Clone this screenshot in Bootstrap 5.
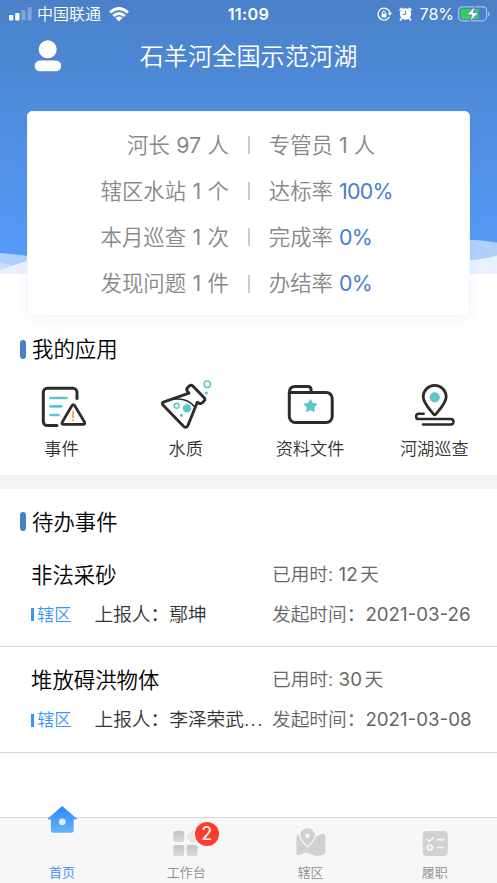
<!DOCTYPE html>
<html lang="zh-CN">
<head>
<meta charset="utf-8">
<meta name="viewport" content="width=device-width, initial-scale=1">
<title>石羊河全国示范河湖</title>
<link href="https://cdn.jsdelivr.net/npm/bootstrap@5.3.0/dist/css/bootstrap.min.css" rel="stylesheet">
<style>
body{font-family:Inter,"Noto Sans CJK SC",sans-serif;font-weight:350;background:#fff;color:#111;height:883px;overflow:hidden}
svg{display:block;flex:none}
b{font-weight:400}
.screen{height:883px}
.hero{height:274px;background:linear-gradient(#4a80c7 0,#4f8cdc 105px,#559af7 255px);flex:none}
.waves{position:absolute;left:0;bottom:0;overflow:visible}
.statusbar{height:28px;font-size:16px;line-height:28px;padding:0 7px 0 9px}
.clock{font-weight:600;font-size:16.3px;letter-spacing:.3px;position:absolute;left:0;right:0;text-align:center}
.alarm{margin-left:7px}
.charge{margin-right:4px;font-weight:400}
.titlebar{height:56px;padding-left:34px}
.page-title{position:absolute;left:0;right:0;text-align:center;font-size:24.2px;line-height:55px;font-weight:350}
.stats{position:relative;margin:27px 27px 0;height:205px;padding-top:9.5px;border-radius:5px;background:#fff;border:1px solid #f0f5ff;box-shadow:0 6px 12px rgba(80,110,220,.06);font-size:21.4px;color:#888}
.stat-line{height:46.3px;line-height:46.3px;white-space:pre}
.stat-l{width:201px;text-align:right;word-spacing:.4px}
.stat-sep{width:1.5px;height:18px;background:#ccc;margin:0 19.3px 0 19px}
.blue{color:#4a80c7;letter-spacing:-.7px;font-weight:400}
.heading{font-size:21.4px;line-height:32px;height:32px;padding-left:20px;gap:6px;color:#000}
.heading i{width:6px;height:19px;border-radius:3px;background:#4a80c7}
.my-apps{height:201px;padding-top:59px}
.apps{font-size:17.2px;line-height:24px;color:#333;padding-top:11px}
.apps svg{margin-bottom:5px}
.apps .col-3{position:relative;left:-.6px}
.band{height:14px;background:#f4f4f4;flex:none}
.pending{padding-top:16.5px}
.pending .heading{margin-bottom:4px}
.todo{height:105.6px;border-bottom:1px solid #d9d9d9;padding:17px 0 0 31px}
.todo-t{font-size:21.4px;line-height:32px;color:#000;width:241px}
.grey{font-size:18.7px;color:#666;line-height:32px;white-space:pre}
.days{margin-right:2.5px;font-weight:400}
.todo-b{font-size:18.7px;line-height:32px;margin-top:8px;color:#333}
.area{width:63.5px;font-size:17.1px;color:#3a95f8;gap:3.5px}
.area i{width:2.6px;height:13px;background:#3a95f8}
.who{width:177.5px;white-space:nowrap}
.dots{letter-spacing:1.3px}
.tabs{height:66px;background:#f7f7f7;border-top:1px solid #d9d9d9;font-size:13px;color:#8e8e8e;padding-top:2px}
.tab-label{line-height:18px;margin-top:3px}
.tab-on{color:#3a8cf7}
.home-icon{margin:-20px 0 23px}
.count{position:absolute;left:70.5px;top:2.3px;width:24px;height:24px;border-radius:50%;background:#ff3b30;color:#fff;font-size:18px;font-weight:400;line-height:24px;text-align:center}
</style>
<script src="https://cdn.jsdelivr.net/npm/bootstrap@5.3.0/dist/js/bootstrap.bundle.min.js"></script>
</head>
<body>
<div class="screen d-flex flex-column">
<header class="hero position-relative">
  <svg class="waves" width="497" height="24" viewBox="0 0 497 24">
    <path fill="#b0d0fc" d="M0 3L30 6V24H0zM467 -10.500Q482 -10 497 -7.500V24H467z"/>
    <path fill="#c7ddfc" d="M0 12L12 16 0 20z"/>
    <path fill="#e8f1fe" d="M0 20L30 9.500V24H0zM467 10.500Q483 9.500 497 5.500V24H467z"/>
  </svg>
  <div class="statusbar d-flex align-items-center text-white position-relative">
    <svg width="24" height="16" viewBox="0 0 24 16" fill="#fff"><rect y="9" width="4.300" height="5.500" rx="1"/><rect x="6.200" y="7" width="4.300" height="7.500" rx="1"/><g opacity=".28"><rect x="12.400" y="4" width="4.300" height="10.500" rx="1"/><rect x="18.500" y="1" width="4.300" height="13.500" rx="1"/></g></svg>
    <span class="ms-1">中国联通</span>
    <svg class="ms-2" width="20" height="15" viewBox="0 0 20 15" fill="none" stroke="#fff" stroke-width="2.900"><path d="M1 5.500Q10-2.600 19 5.500M4.200 9Q10 3.900 15.800 9"/><path stroke="none" fill="#fff" d="M10 14.500L6.500 10.900Q10 8 13.500 10.900z"/></svg>
    <span class="clock">11:09</span>
    <svg class="ms-auto" width="15" height="15" viewBox="0 0 15 15"><path d="M9.800 1.800A6 6 0 1 0 12.400 10M9.800 1.800A6 6 0 0 1 13 6" fill="none" stroke="#fff" stroke-width="1.300"/><path d="M10.700 5.800h4.300l-2.200 3z" fill="#fff"/><rect x="4.500" y="6.500" width="5" height="3.900" rx=".6" fill="#fff"/><path d="M5.500 7V5.500a1.500 1.500 0 0 1 3 0V7" fill="none" stroke="#fff"/></svg>
    <svg class="alarm" width="13" height="14" viewBox="0 0 13 14"><circle cx="6.500" cy="7" r="5.700" fill="#fff"/><path d="M1.200 2.800L2.800 1.400M11.800 2.800L10.200 1.400M2.600 11.500L1.500 12.900M10.400 11.500L11.500 12.900" stroke="#fff" stroke-width="1.800" stroke-linecap="round"/><path d="M6.700 3.600V7.300H3.500" fill="none" stroke="#4a80c7" stroke-width="1"/></svg>
    <span class="ms-2 charge">78%</span>
    <svg width="32" height="16" viewBox="0 0 32 16"><rect x=".6" y=".9" width="28" height="13.900" rx="3.800" fill="none" stroke="#fff" stroke-opacity=".5" stroke-width="1.200"/><path d="M30 5.500q1.600.8 1.600 2.400T30 10.300z" fill="#fff" opacity=".5"/><path d="M5 2.900H20.500V12.900H5a2.300 2.300 0 0 1-2.300-2.300V5.200A2.300 2.300 0 0 1 5 2.900z" fill="#32d158"/><path d="M17 .3L8.700 8.900h5L11.900 15.700 20.700 6.600H15.500z" fill="#fff" stroke="#4a80c7" stroke-width=".9"/></svg>
  </div>
  <div class="titlebar d-flex align-items-center text-white position-relative">
    <svg width="28" height="32" viewBox="0 0 28 32" fill="#fff"><circle cx="13.700" cy="9.300" r="9"/><rect x=".7" y="20.500" width="26.500" height="10.700" rx="5.300"/></svg>
    <h1 class="page-title m-0">石羊河全国示范河湖</h1>
  </div>
  <div class="stats">
    <div class="stat-line d-flex align-items-center"><span class="stat-l">河长 <b>97</b> 人</span><i class="stat-sep"></i><span>专管员 <b>1</b> 人</span></div>
    <div class="stat-line d-flex align-items-center"><span class="stat-l">辖区水站 <b>1</b> 个</span><i class="stat-sep"></i><span>达标率 <span class="blue">100%</span></span></div>
    <div class="stat-line d-flex align-items-center"><span class="stat-l">本月巡查 <b>1</b> 次</span><i class="stat-sep"></i><span>完成率 <span class="blue">0%</span></span></div>
    <div class="stat-line d-flex align-items-center"><span class="stat-l">发现问题 <b>1</b> 件</span><i class="stat-sep"></i><span>办结率 <span class="blue">0%</span></span></div>
  </div>
</header>
<section class="my-apps">
  <div class="heading d-flex align-items-center"><i></i><span>我的应用</span></div>
  <div class="apps row g-0 text-center">
    <div class="col-3"><svg class="mx-auto" width="60" height="56" viewBox="0 0 60 56" fill="none" stroke="#2c2c2c" stroke-width="3" stroke-linecap="round" stroke-linejoin="round"><path d="M45 22.500V16.300a4 4 0 0 0-4-4H15.300a4 4 0 0 0-4 4V45.500a4 4 0 0 0 4 4H25"/><path stroke="#5cc7cf" stroke-width="2.700" d="M18.500 22H34.500M18.500 30.300H29.300M18.500 39H26.500"/><path stroke-width="2.700" d="M41.300 28.500Q42 28.500 42.600 29.500L52.600 46.300Q53.300 48.300 51.500 48.400H31Q29.300 48.300 30.200 46.300L40 29.500Q40.600 28.500 41.300 28.500z"/><path stroke="#f0ad2e" stroke-width="1.900" stroke-linecap="butt" d="M41.100 35V42M41.100 43.500v1.800"/></svg>事件</div>
    <div class="col-3"><svg class="mx-auto" width="60" height="56" viewBox="0 0 60 56" fill="none" stroke="#2c2c2c" stroke-width="2.900" stroke-linecap="round" stroke-linejoin="round"><path d="M33 17.200L8 25.800Q5.300 27 7 29L27.500 50.200Q30.300 52.800 31.800 49.700L41.300 26.300 42.800 27.100Q45 28 46.300 26.800L48.300 24.800Q49.500 23.300 48.200 21.700L36.800 10Q35 8.200 33.200 10L31.300 12Q30 13.700 31.500 15.400z"/><path stroke-width="1.500" d="M18 23.300Q31.500 21.800 39 31.200"/><g stroke="#5cc7cf" stroke-width="1.500"><circle cx="20.700" cy="29.800" r="2.500"/><circle cx="51.300" cy="8.300" r="3.200"/></g><g fill="#5cc7cf" stroke="none"><circle cx="31" cy="32.300" r="4.100"/><circle cx="25.400" cy="39.300" r="1.600"/><circle cx="50.400" cy="17" r="1.600"/></g></svg>水质</div>
    <div class="col-3"><svg class="mx-auto" width="60" height="56" viewBox="0 0 60 56" fill="none" stroke="#2c2c2c" stroke-width="3" stroke-linecap="round" stroke-linejoin="round"><path d="M9.300 16.500H46a6 6 0 0 1 6.200 6V40.500a6 6 0 0 1-6.200 6H15.300a6 6 0 0 1-6-6zM9.300 16.500q.3-6 5.800-6H28q3 0 3 3v2.500"/><path fill="#5cc7cf" stroke="#5cc7cf" stroke-width="1.500" d="M30.400 24l1.900 3.600 4 .7-2.900 2.800.6 4.100-3.600-1.900-3.700 1.900.7-4.100-2.900-2.800 4-.7z"/></svg>资料文件</div>
    <div class="col-3"><svg class="mx-auto" width="60" height="56" viewBox="0 0 60 56" fill="none" stroke="#2c2c2c" stroke-width="2.800" stroke-linecap="round" stroke-linejoin="round"><path d="M30.700 9.300a11.500 11.500 0 0 1 11.500 11.500c0 6-6 12-10.300 17.400q-1.200 1.500-2.400 0C25.200 32.800 19.200 26.800 19.200 20.800A11.500 11.500 0 0 1 30.700 9.300z"/><circle cx="30.700" cy="21.400" r="5.100" stroke="none" fill="#5cc7cf"/><path stroke-width="2.500" d="M19.700 37.700H14.800a2.600 2.600 0 0 0 0 5.400H46.700a2.700 2.700 0 0 1 0 5.500H18.900"/></svg>河湖巡查</div>
  </div>
</section>
<div class="band"></div>
<section class="pending">
  <div class="heading d-flex align-items-center"><i></i><span>待办事件</span></div>
  <article class="todo">
    <div class="d-flex"><span class="todo-t">非法采砂</span><span class="grey">已用时: <span class="days">12</span>天</span></div>
    <div class="todo-b d-flex"><span class="area d-flex align-items-center"><i></i>辖区</span><span class="who">上报人：鄢坤</span><span class="grey">发起时间：<b>2021-03-26</b></span></div>
  </article>
  <article class="todo">
    <div class="d-flex"><span class="todo-t">堆放碍洪物体</span><span class="grey">已用时: <span class="days">30</span>天</span></div>
    <div class="todo-b d-flex"><span class="area d-flex align-items-center"><i></i>辖区</span><span class="who">上报人：李泽荣武<span class="dots">...</span></span><span class="grey">发起时间：<b>2021-03-08</b></span></div>
  </article>
</section>
<nav class="tabs d-flex mt-auto text-center">
  <div class="flex-fill w-25 tab-on"><svg class="mx-auto home-icon" width="60" height="40" viewBox="0 -20 60 40"><defs><linearGradient id="home" x1="0" y1="0" x2="0" y2="1"><stop stop-color="#2b88fc"/><stop offset="1" stop-color="#68b1fb"/></linearGradient><linearGradient id="tile" x1="0" y1="0" x2="0" y2="1"><stop stop-color="#c3c3c3"/><stop offset="1" stop-color="#dadada"/></linearGradient></defs><path fill="url(#home)" d="M30.200-14L44.700-1.400Q45.200-.6 44.200-.6H41.700V10.600Q41.700 12.700 39.700 12.700H20.900Q18.900 12.700 18.900 10.600V-.6H16.300Q15.300-.6 15.900-1.400z"/><circle cx="30.300" cy="1.800" r="3.400" fill="#deedfc"/></svg><div class="tab-label">首页</div></div>
  <div class="flex-fill w-25 position-relative"><svg class="mx-auto" width="60" height="40" viewBox="0 0 60 40"><g fill="url(#tile)"><rect x="17.300" y="11" width="11" height="11" rx="2.500"/><rect x="17.300" y="25" width="11" height="11" rx="2.500"/><rect x="30.600" y="25" width="11" height="11" rx="2.500"/></g><rect x="31.500" y="11.500" width="10.500" height="10.500" rx="2" transform="rotate(45 36.700 16.700)" fill="#e8e8e8"/></svg><span class="count">2</span><div class="tab-label">工作台</div></div>
  <div class="flex-fill w-25"><svg class="mx-auto" width="60" height="40" viewBox="0 0 60 40"><path fill="#d1d1d1" d="M17.500 14.500L25 16 34 17 41.600 13.600Q44.400 13 44.400 16V32.500Q44.400 34 42.900 34.600L37 36Q35.500 36.300 34 35.500L26.500 33Q25 32.500 23.500 33L18 35Q15.400 35.600 15.400 33V17Q15.400 15 17.500 14.500z"/><path fill="#d1d1d1" stroke="#f7f7f7" stroke-width="1.300" d="M26.500 7.500a7.800 7.800 0 0 1 7.900 7.800c0 4.500-4.500 8-7.900 11.500C23 23.300 18.600 19.800 18.600 15.300A7.800 7.800 0 0 1 26.500 7.500z"/><circle cx="26.500" cy="15.800" r="2.200" fill="#f7f7f7"/></svg><div class="tab-label">辖区</div></div>
  <div class="flex-fill w-25"><svg class="mx-auto" width="60" height="40" viewBox="0 0 60 40" fill="none" stroke="#f7f7f7" stroke-width="1.700" stroke-linecap="round" stroke-linejoin="round"><rect x="17.800" y="11" width="25" height="25" rx="4" fill="#d1d1d1" stroke="none"/><path d="M22.300 19.500L24.300 21.500 27.800 17.900M32.500 19.700H38.500M32.500 27.500H38.500"/><circle cx="25" cy="27.500" r="2.500"/></svg><div class="tab-label">履职</div></div>
</nav>
</div>
</body>
</html>
